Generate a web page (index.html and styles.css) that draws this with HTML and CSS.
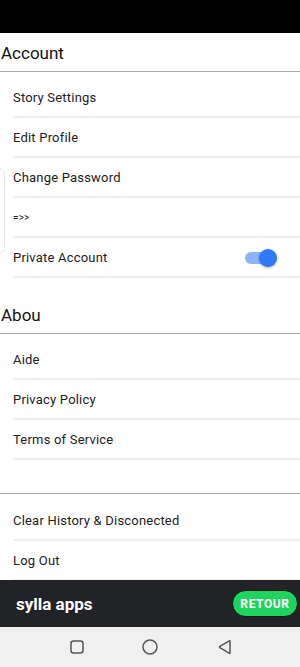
FILE: index.html
```html
<!DOCTYPE html>
<html>
<head>
    <title>Settings</title>
    <link rel="stylesheet" href="styles.css">
</head>
<body>
    <div class="screen">
        <div class="status-bar"></div>
        <div class="content">
            <div class="side-tab"></div>

            <h2 class="section-title">Account</h2>
            <div class="list">
                <div class="row">Story Settings</div>
                <div class="row">Edit Profile</div>
                <div class="row">Change Password</div>
                <div class="row small">=&gt;&gt;</div>
                <div class="row">
                    Private Account
                    <span class="toggle"><span class="thumb"></span></span>
                </div>
            </div>

            <h2 class="section-title">Abou</h2>
            <div class="list">
                <div class="row">Aide</div>
                <div class="row">Privacy Policy</div>
                <div class="row">Terms of Service</div>
            </div>

            <div class="section-title empty"></div>
            <div class="list last">
                <div class="row">Clear History &amp; Disconected</div>
                <div class="row">Log Out</div>
            </div>
        </div>

        <div class="app-bar">
            <span class="app-name">sylla apps</span>
            <button class="back-btn">RETOUR</button>
        </div>

        <div class="nav-bar">
            <svg class="nav-square" width="16" height="16" viewBox="0 0 16 16">
                <rect x="2" y="2" width="12" height="12" rx="2.5" fill="none" stroke="#555" stroke-width="1.5"/>
            </svg>
            <svg width="18" height="18" viewBox="0 0 18 18">
                <circle cx="9" cy="9" r="7" fill="none" stroke="#555" stroke-width="1.5"/>
            </svg>
            <svg width="16" height="16" viewBox="0 0 16 16">
                <path d="M13 2.2 L13 13.8 Q13 14.6 12.3 14.2 L2.8 8.6 Q2.2 8 2.8 7.4 L12.3 1.8 Q13 1.4 13 2.2 Z" fill="none" stroke="#555" stroke-width="1.5" stroke-linejoin="round"/>
            </svg>
        </div>
    </div>
</body>
</html>
```

FILE: styles.css
```css
* {
    box-sizing: border-box;
}
body {
    margin: 0;
    font-family: Roboto, "Liberation Sans", sans-serif;
    background-color: #fff;
}
.screen {
    display: flex;
    flex-direction: column;
    height: 667px;
    width: 300px;
    overflow: hidden;
}
.status-bar {
    height: 33px;
    background-color: #000;
}
.content {
    flex: 1;
    position: relative;
    overflow: hidden;
}
.side-tab {
    position: absolute;
    left: -20px;
    top: 134px;
    width: 25px;
    height: 88px;
    border: 1px solid #e8e8e8;
    border-radius: 8px;
}
.section-title {
    margin: 17px 0 0 0;
    padding-left: 1px;
    height: 39px;
    line-height: 40px;
    font-size: 17px;
    font-weight: normal;
    color: #111;
    border-bottom: 1px solid #a9a9a9;
}
.section-title:first-of-type {
    margin-top: 0;
}
.section-title.empty {
    height: 17px;
}
.list {
    padding-top: 6px;
}
.list.last {
    padding-top: 7px;
}
.row {
    display: flex;
    align-items: center;
    justify-content: space-between;
    margin-left: 13px;
    height: 40px;
    padding-top: 1px;
    border-bottom: 2px solid #efefef;
    font-size: 13px;
    letter-spacing: 0.2px;
    color: #222;
}
.row.small {
    font-size: 10px;
}
.toggle {
    position: relative;
    width: 26px;
    height: 12px;
    margin-right: 29px;
    border-radius: 6px;
    background-color: #8db5fa;
}
.thumb {
    position: absolute;
    right: -6px;
    top: -3px;
    width: 18px;
    height: 18px;
    border-radius: 50%;
    background-color: #2f79f5;
    box-shadow: 0 1px 3px rgba(0, 0, 0, 0.3);
}
.app-bar {
    height: 47px;
    display: flex;
    align-items: center;
    justify-content: space-between;
    padding: 0 2px 0 16px;
    background-color: #222327;
}
.app-name {
    color: #fff;
    font-size: 17px;
    font-weight: bold;
}
.back-btn {
    width: 66px;
    height: 27px;
    border: 1px solid #111;
    border-radius: 14px;
    background-color: #1ed45f;
    color: #fff;
    font-family: Roboto, "Liberation Sans", sans-serif;
    font-size: 12px;
    font-weight: bold;
    letter-spacing: 0.6px;
    cursor: pointer;
}
.nav-bar {
    height: 40px;
    display: flex;
    align-items: center;
    justify-content: center;
    gap: 58px;
    background-color: #f0f0f0;
}
.nav-square {
    margin-right: -2px;
    margin-left: 2px;
}
```
